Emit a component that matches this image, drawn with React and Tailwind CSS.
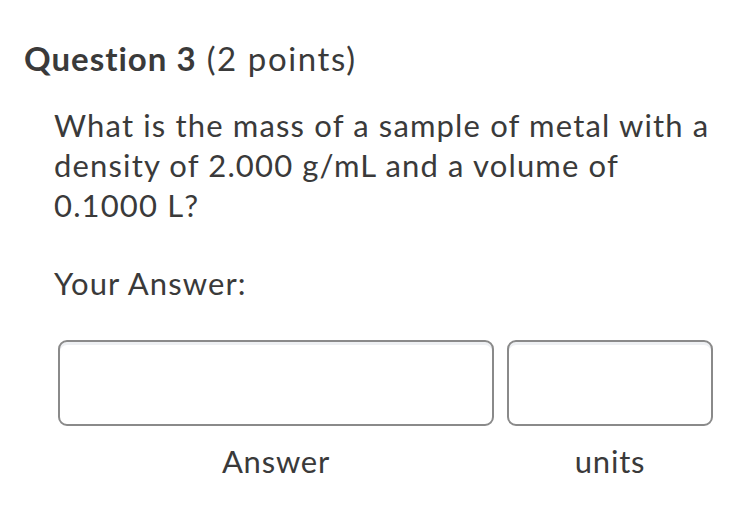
export default function App() {
  return (
    <div className="w-[738px] h-[515px] bg-white overflow-hidden text-[#3a3a3a]" style={{ fontFamily: "Lato, 'Noto Sans', sans-serif" }}>
      <div className="pl-[24px] pt-[38px]">
        <h2 className="text-[33px] leading-[40px] tracking-[1.6px]">
          <span className="font-bold tracking-[1px]">Question 3</span> <span>(2 points)</span>
        </h2>
      </div>
      <div className="pl-[54px] pt-[27px]">
        <p className="w-[666px] text-[31px] leading-[40px] tracking-[1.15px]">
          What is the mass of a sample of metal with a density of 2.000 g/mL and a volume of 0.1000 L?
        </p>
        <p className="text-[31px] leading-[40px] tracking-[1.1px] mt-[38px]">Your Answer:</p>
      </div>
      <div className="flex pl-[58px] mt-[37px] gap-[13px]">
        <div className="flex flex-col items-center">
          <div className="w-[436px] h-[86px] rounded-[9px] border-2 border-[#8a8a8a] bg-white shadow-[inset_0_3px_0_#eef0f3]" />
          <div className="text-[31px] leading-[38px] tracking-[0.8px] mt-[16px]">Answer</div>
        </div>
        <div className="flex flex-col items-center">
          <div className="w-[206px] h-[86px] rounded-[9px] border-2 border-[#8a8a8a] bg-white shadow-[inset_0_3px_0_#eef0f3]" />
          <div className="text-[31px] leading-[38px] tracking-[0.8px] mt-[16px]">units</div>
        </div>
      </div>
    </div>
  );
}
